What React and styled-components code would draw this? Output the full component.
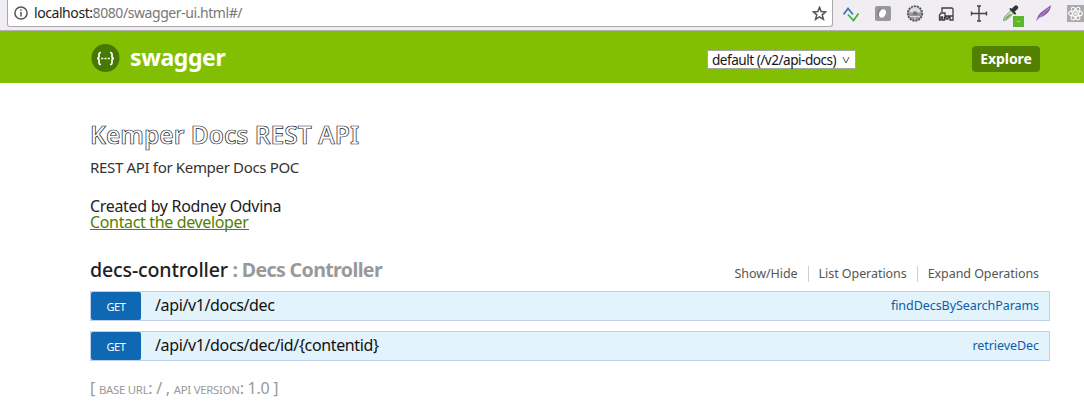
import React from 'react';
import styled, { createGlobalStyle } from 'styled-components';

const Global = createGlobalStyle`
  * { box-sizing: border-box; }
  body { margin: 0; background: #fff; font-family: "Noto Sans", "Open Sans", sans-serif; overflow: hidden; }
`;
const Page = styled.div`height: 401px; overflow: hidden;`;
const BrowserBar = styled.div`
  height: 31px; background: #f1eef3; border-bottom: 1px solid #b5b0b5;
  display: flex; align-items: flex-start; padding-left: 7px;
`;
const Address = styled.div`
  width: 826px; height: 27px; background: #fff; border: 1px solid #aaa; border-top: 0;
  border-radius: 0 0 3px 3px; display: flex; align-items: center; padding: 0 5px 0 6px;
`;
const Url = styled.div`
  flex: 1; margin-left: 6px; font-size: 14px; line-height: 26px; color: #777; white-space: nowrap;
  letter-spacing: ${p => p.$track}px;
  b { font-weight: 400; color: #1c1c1c; }
`;
const Extensions = styled.div`
  display: flex; height: 27px; align-items: center; padding-left: 8px; gap: 12px;
  svg { flex: none; overflow: visible; }
`;
const Header = styled.header`height: 52px; background: #82bf03; padding: 0 44px 0 91px; display: flex; align-items: center;`;
const Brand = styled.div`
  margin-left: 10px; margin-top: 0; color: #fff; font-weight: 700; font-size: 23px; line-height: 30px;
  letter-spacing: ${p => p.$track}px; flex: 1;
`;
const Select = styled.div`
  width: 149px; height: 19px; margin: 5px 116px 0 0; background: #fff; border: 1px solid #a5a8a0;
  display: flex; align-items: center; justify-content: space-between; padding: 0 5px 0 4px;
  font-size: 13.6px; line-height: 17px; color: #161616; white-space: nowrap;
  span { letter-spacing: ${p => p.$track}px; }
`;
const Explore = styled.div`
  width: 68px; height: 26px; margin-top: 4px; border-radius: 4px; background: #528000; color: #fff;
  font-weight: 700; font-size: 14px; line-height: 26px; text-align: center; letter-spacing: ${p => p.$track}px;
`;
const Main = styled.main`width: 960px; margin-left: 90px; padding-top: 35px;`;
const Line = styled.div`
  display: flex; white-space: nowrap; height: ${p => p.$h}px; line-height: ${p => p.$h}px;
  margin-top: ${p => p.$top || 0}px; font-size: ${p => p.$size}px; color: ${p => p.$color};
  letter-spacing: ${p => p.$track || 0}px;
`;
const Title = styled(Line)`
  font-weight: 600; -webkit-text-stroke: 0.7px #20242c; color: #fff;
`;
const Contact = styled.a`
  color: #547f00; height: 16px; line-height: 16px; border-bottom: 1px solid #547f00;
`;
const ResourceHead = styled.div`display: flex; justify-content: space-between; height: 30px; margin: 25px 0 6px;`;
const ResourceName = styled.h2`
  margin: 0; font-size: 19.6px; line-height: 30px; color: #999; white-space: nowrap; letter-spacing: ${p => p.$track}px;
  span { font-weight: 500; color: #222; letter-spacing: ${p => p.$nameTrack}px; }
`;
const Options = styled.div`
  display: flex; align-items: center; padding: 7px 11px 0 0; height: 30px; font-size: 12.5px; color: #555;
`;
const Option = styled.span`
  line-height: 16px; white-space: nowrap; letter-spacing: ${p => p.$track}px;
  & + & { border-left: 1px solid #ccd0cc; margin-left: 10px; padding-left: 10px; }
`;
const Operation = styled.div`
  height: 30px; margin-bottom: 10px; border: 1px solid #bfd0ee; background: #e3f3fc;
  display: flex; align-items: center; padding-right: 10px;
`;
const Method = styled.div`
  width: 50px; height: 28px; border-radius: 2px; background: #0f68b4; color: #fff;
  font-size: 11px; line-height: 29px; text-align: center; letter-spacing: -0.4px; margin-right: 14px;
`;
const Path = styled.div`flex: 1; font-size: 16px; line-height: 26px; margin-top: -2px; color: #111; letter-spacing: ${p => p.$track}px;`;
const Nickname = styled.div`font-size: 12.5px; line-height: 26px; color: #0f5cab; letter-spacing: ${p => p.$track}px;`;
const Footer = styled.div`
  margin-top: 16px; font-size: 16px; line-height: 22px; color: #999; letter-spacing: ${p => p.$track}px; white-space: nowrap;
  span { font-size: 11.4px; text-transform: uppercase; }
`;

function InfoIcon() {
  return (
    <svg width="14" height="14" viewBox="0 0 14 14" fill="none" stroke="#555" strokeWidth="1.5">
      <circle cx="7" cy="7" r="6.1" /><path d="M7 6v4.5M7 3.2v1.6" />
    </svg>
  );
}
function StarIcon() {
  return (
    <svg width="15" height="15" viewBox="0 0 15 15" fill="none" stroke="#555" strokeWidth="1.5">
      <path d="M7.500 1.400l1.700 4.200 4.500.3-3.500 2.900 1.200 4.500-3.900-2.500-3.900 2.500 1.200-4.500L1.300 5.900l4.500-.3z" />
    </svg>
  );
}
function ExtensionIcons() {
  return (
    <Extensions>
      <svg width="20" height="20" viewBox="0 0 20 20" fill="none" strokeWidth="1.800">
        <path d="M2.500 10.500L7 4.500l5 6" stroke="#4674b4" /><path d="M7 10.500l5.500 6 5-7" stroke="#42b33c" />
      </svg>
      <svg width="20" height="20" viewBox="0 0 20 20">
        <rect x="2" y="2" width="16" height="15" rx="2" fill="#999" /><ellipse cx="9.500" cy="9.500" rx="3.200" ry="4.300" transform="rotate(25 9.500 9.500)" fill="#fff" />
        <path d="M6 13c-2-3-1-7 2-9" stroke="#777" fill="none" />
      </svg>
      <svg width="20" height="20" viewBox="0 0 20 20">
        <circle cx="10" cy="9.500" r="7.300" fill="#999" stroke="#555" strokeWidth="1.700" strokeDasharray="2 1" />
        <path d="M4.500 8.500a5.500 5.500 0 0 1 11 0z" fill="#ddd" /><circle cx="10" cy="9.500" r="2.300" fill="#777" />
        <path d="M5 12.500h10M10 11.500v4" stroke="#ddd" />
      </svg>
      <svg width="20" height="20" viewBox="0 0 20 20" fill="none" stroke="#3e3e42" strokeWidth="1.300">
        <path d="M5 8V4h10l1 1v11h-3v-2.500h-2V15H9v-1.500H7.500V16h-2v-3H4v3H2.500v-5L4 9h4v3h8" />
      </svg>
      <svg width="20" height="20" viewBox="0 0 20 20" fill="none" stroke="#444" strokeWidth="1.400">
        <path d="M2.500 9.500h15M10 2v15M8 2h4M8 17h4M2.500 7.500v4M17.500 7.500v4" />
      </svg>
      <svg width="22" height="22" viewBox="0 0 22 22">
        <path d="M2.500 17.500l1-3.500 7-7 2.500 2.500-7 7z" fill="#d7e8cf" stroke="#888" strokeWidth="1" />
        <path d="M4 16l1-2 4-3h2l-5.500 5z" fill="#62b541" />
        <path d="M9.500 6l4.500 4.500" stroke="#333" strokeWidth="2" strokeLinecap="round" /><path d="M13 6.500L15 4.500" stroke="#333" strokeWidth="4.200" strokeLinecap="round" />
        <rect x="12" y="13" width="11" height="11" fill="#60b52c" /><path d="M16 18.500h3" stroke="#9cda79" />
      </svg>
      <svg width="18" height="20" viewBox="0 0 18 20">
        <path d="M1 17l2-5C6 7 11 5 16 1c-.5 6-4 10-11 12.500z" fill="#8d57b3" /><path d="M1 17C6 11 10 8 14 4" stroke="#c79bdc" fill="none" />
      </svg>
      <svg width="18" height="20" viewBox="0 0 18 20">
        <rect x="2" y="1" width="17" height="17" fill="#aaa" />
        <g fill="none" stroke="#fff" strokeWidth="1.100"><ellipse cx="10.500" cy="9.500" rx="7" ry="2.700" /><ellipse cx="10.500" cy="9.500" rx="7" ry="2.700" transform="rotate(60 10.500 9.500)" /><ellipse cx="10.500" cy="9.500" rx="7" ry="2.700" transform="rotate(120 10.500 9.500)" /></g>
        <circle cx="10.500" cy="9.500" r="1.300" fill="#fff" />
      </svg>
    </Extensions>
  );
}
function SwaggerLogo() {
  return (
    <svg width="29" height="29" viewBox="0 0 29 29" fill="none" stroke="#fff" strokeWidth="1.700">
      <circle cx="14.500" cy="15" r="14" fill="#477800" stroke="none" />
      <path d="M10 9.500c-2 0-2 .5-2 2v2c0 1.300-.5 2-2 2 1.500 0 2 .7 2 2v2c0 1.500 0 2 2 2M19 9.500c2 0 2 .5 2 2v2c0 1.300.5 2 2 2-1.500 0-2 .7-2 2v2c0 1.500 0 2-2 2" />
      <path d="M10.200 15.500h2M13.500 15.500h2M16.800 15.500h2" />
    </svg>
  );
}

const operations = [
  { path: '/api/v1/docs/dec', nickname: 'findDecsBySearchParams' },
  { path: '/api/v1/docs/dec/id/{contentid}', nickname: 'retrieveDec' },
];

export default function App() {
  return (
    <Page>
      <Global />
      <BrowserBar>
        <Address>
          <InfoIcon />
          <Url $track={-0.43}><b>localhost:</b>8080/swagger-ui.html#/</Url>
          <StarIcon />
        </Address>
        <ExtensionIcons />
      </BrowserBar>
      <Header>
        <SwaggerLogo />
        <Brand $track={-0.4}>swagger</Brand>
        <Select $track={-0.5}>
          <span>default (/v2/api-docs)</span>
          <svg width="8" height="8" viewBox="0 0 8 8" fill="none" stroke="#555"><path d="M1 1l3 6 3-6" /></svg>
        </Select>
        <Explore $track={-0.1}>Explore</Explore>
      </Header>
      <Main>
        <Title $h={34} $size={24.6} $track={0}>Kemper Docs REST API</Title>
        <Line $h={20} $top={5} $size={15} $color="#333" $track={-0.33}>REST API for Kemper Docs POC</Line>
        <Line $h={16} $top={21} $size={16} $color="#222" $track={-0.32}>Created by Rodney Odvina</Line>
        <Line $h={16} $size={16} $color="#547f00" $track={-0.35}><Contact>Contact the developer</Contact></Line>
        <ResourceHead>
          <ResourceName $track={-0.64} $nameTrack={-0.15}><span>decs-controller</span> : Decs Controller</ResourceName>
          <Options>
            <Option $track={-0.06}>Show/Hide</Option>
            <Option $track={-0.06}>List Operations</Option>
            <Option $track={-0.06}>Expand Operations</Option>
          </Options>
        </ResourceHead>
        {operations.map(op => (
          <Operation key={op.path}>
            <Method>GET</Method>
            <Path $track={-0.37}>{op.path}</Path>
            <Nickname $track={-0.06}>{op.nickname}</Nickname>
          </Operation>
        ))}
        <Footer $track={-0.27}>[ <span>base url</span>: / , <span>api version</span>: 1.0 ]</Footer>
      </Main>
    </Page>
  );
}
